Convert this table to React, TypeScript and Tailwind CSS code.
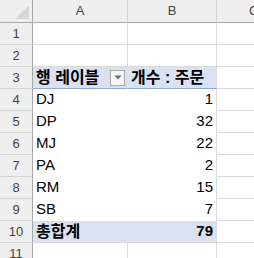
import React from "react";

const FONT = '"Liberation Sans", "Noto Sans CJK KR", sans-serif';

type RowDef = {
  n: number;
  a?: React.ReactNode;
  b?: React.ReactNode;
  kind?: "plain" | "head" | "data" | "total";
};

const rows: RowDef[] = [
  { n: 1, kind: "plain" },
  { n: 2, kind: "plain" },
  { n: 3, kind: "head" },
  { n: 4, a: "DJ", b: "1", kind: "data" },
  { n: 5, a: "DP", b: "32", kind: "data" },
  { n: 6, a: "MJ", b: "22", kind: "data" },
  { n: 7, a: "PA", b: "2", kind: "data" },
  { n: 8, a: "RM", b: "15", kind: "data" },
  { n: 9, a: "SB", b: "7", kind: "data" },
  { n: 10, a: "총합계", b: "79", kind: "total" },
  { n: 11, kind: "plain" },
];

function Dropdown() {
  return (
    <span className="ml-auto mr-[2px] flex h-[16px] w-[15px] items-center justify-center border border-[#a6a6a6] bg-[#f7f7f7]">
      <svg width="8" height="5" viewBox="0 0 8 5">
        <path d="M0.5 0.5 L7.5 0.5 L4 4.5 Z" fill="#6b6b6b" />
      </svg>
    </span>
  );
}

function Row({ r }: { r: RowDef }) {
  const kind = r.kind;
  let aCls = "border-r border-b border-[#dadada]";
  let bCls = "border-b border-[#dadada]";
  if (kind === "head") {
    aCls = "bg-[#d9e1f2] border-b border-[#8ea9db] border-r border-r-[#d9e1f2]";
    bCls = "bg-[#d9e1f2] border-b border-[#8ea9db]";
  } else if (kind === "data") {
    aCls = "border-r border-r-white border-b border-white";
    bCls = "border-b border-white";
  } else if (kind === "total") {
    aCls = "bg-[#d9e1f2] border-r border-r-[#d9e1f2] border-b border-[#dadada]";
    bCls = "bg-[#d9e1f2] border-b border-[#dadada]";
  }
  return (
    <div className="flex h-[22px]">
      <div className="flex w-[33px] shrink-0 items-center justify-center border-r border-b border-r-[#a8a8a8] border-b-[#d4d4d4] bg-[#efefef] text-[13px] text-[#444444]">
        {r.n}
      </div>
      <div
        className={`flex w-[95px] shrink-0 items-center pl-[3px] text-black ${aCls} ${
          kind === "head" || kind === "total" ? "font-bold text-[16px]" : "text-[15px]"
        }`}
      >
        {kind === "head" ? (
          <>
            <span className="font-bold">행 레이블</span>
            <Dropdown />
          </>
        ) : (
          r.a
        )}
      </div>
      <div
        className={`flex w-[89px] shrink-0 items-center border-r border-r-[#dadada] pr-[3px] text-black ${bCls} ${
          kind === "head" ? "justify-start pl-[3px] font-bold text-[16px]" : "justify-end text-[15px]"
        } ${kind === "total" ? "font-bold" : ""}`}
      >
        {kind === "head" ? "개수 : 주문" : r.b}
      </div>
      <div className="flex-1 border-b border-[#dadada]" />
    </div>
  );
}

export default function App() {
  return (
    <div
      className="h-[258px] w-[254px] overflow-hidden bg-white"
      style={{ fontFamily: FONT }}
    >
      <div className="flex h-[23px]">
        <div className="relative w-[33px] shrink-0 border-r border-b border-[#a8a8a8] bg-[#efefef]">
          <svg className="absolute left-[15px] top-[5px]" width="14" height="14" viewBox="0 0 14 14">
            <path d="M14 0 L14 14 L0 14 Z" fill="#d7d7d7" />
          </svg>
        </div>
        <div className="flex w-[95px] shrink-0 items-center justify-center border-r border-b border-r-[#d4d4d4] border-b-[#a8a8a8] bg-[#efefef] text-[13px] text-[#444444]">
          A
        </div>
        <div className="flex w-[89px] shrink-0 items-center justify-center border-r border-b border-r-[#d4d4d4] border-b-[#a8a8a8] bg-[#efefef] text-[13px] text-[#444444]">
          B
        </div>
        <div className="flex flex-1 items-center border-b border-[#a8a8a8] bg-[#efefef] pl-[32px] text-[13px] text-[#444444]">
          C
        </div>
      </div>
      {rows.map((r) => (
        <Row key={r.n} r={r} />
      ))}
    </div>
  );
}
